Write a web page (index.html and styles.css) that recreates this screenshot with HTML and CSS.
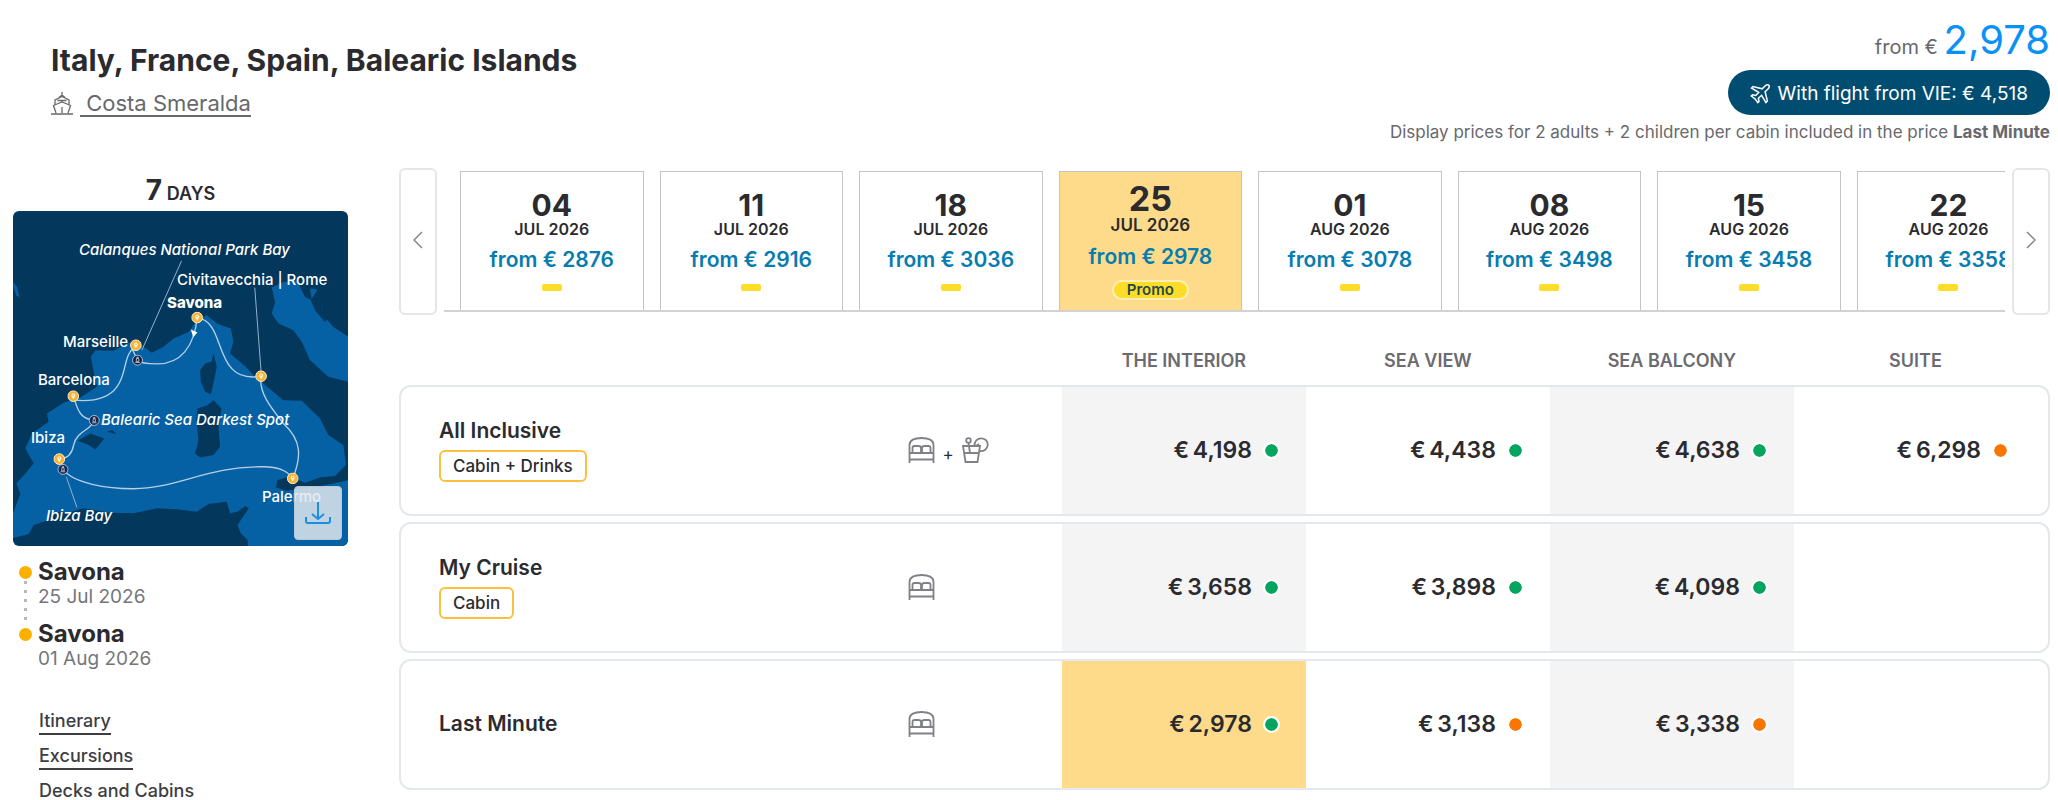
FILE: index.html
```html
<!DOCTYPE html>
<html lang="en">
<head>
  <meta charset="UTF-8">
  <meta name="viewport" content="width=device-width, initial-scale=1.0">
  <title>Italy, France, Spain, Balearic Islands</title>
  <link rel="stylesheet" href="styles.css">
</head>
<body>

  <!-- shared icons -->
  <svg class="icon-defs" aria-hidden="true">
    <symbol id="icon-bed" viewBox="0 0 26 26">
      <path d="M1 26V8C1 3 6 1 13 1s12 2 12 7v18M1 16h24M1 22.500h24M4 16v-5c0-1.500 1-2 2-2h4c1.500 0 2.500 1 2.500 2v5M13.500 16v-5c0-1 1-2 2.500-2h4c1 0 2 .5 2 2v5"/>
    </symbol>
    <symbol id="icon-drink" viewBox="0 0 27 26">
      <path d="M1 9h17l-2.500 16h-12zM2.500 16h14.500M8 16L6.500 6"/>
      <circle cx="6.500" cy="3.500" r="2.300"/>
      <path d="M12.500 9C12 4.500 15.500 1 19.500 1.300c4 .3 6.500 3.200 6.200 6.700-.3 4-3.700 6.500-8 6M14 9l3-2"/>
    </symbol>
    <symbol id="pin" viewBox="0 0 36 36">
      <circle cx="18" cy="18" r="16" fill="#f9b233" stroke="#fdf0cc" stroke-width="3"/>
      <path d="M18 28l-5-9a6 6 0 1 1 10 0z" fill="#fff6d8"/>
      <circle cx="18" cy="15" r="2.500" fill="#f9b233"/>
    </symbol>
    <symbol id="buoy" viewBox="0 0 36 36">
      <circle cx="18" cy="18" r="15" fill="#16284a" stroke="#c7d3e3" stroke-width="2.500"/>
      <path d="M15 13h6l1 9h-8zM16 13V9h4v4M11 25h14" fill="none" stroke="#dfe7f2" stroke-width="2"/>
    </symbol>
  </svg>

  <header class="cruise-header">
    <div class="cruise-heading">
      <h1 class="cruise-title">Italy, France, Spain, Balearic Islands</h1>
      <div class="ship">
        <svg class="ship-icon" viewBox="0 0 22 23" aria-hidden="true">
          <path d="M0 22h22M5 21L2.500 13.500 6 12l5-2 5 2 3.500 1.500L17 21M4 12.500V8l7-3.500L18 8v4.500M6.500 8.500h9M8 5.500L11 3l3 2.500M11 3V0M11 15v6"/>
        </svg>
        <a href="#" class="ship-link">&nbsp;Costa Smeralda</a>
      </div>
    </div>
    <div class="cruise-price">
      <p class="total">from € <span class="total-amount">2,978</span></p>
      <button class="flight-button">
        <svg class="flight-icon" viewBox="0 0 20 20" aria-hidden="true">
          <path d="M18.800 1.200c-1.200-.8-2.800-.2-3.800.8l-2.800 2.800L3 2.500 1.500 4l7.200 4.300-2.900 3.200-3.300-.7L1.300 12l3.700 2.800L7.800 18.700 9 17.500l-.6-3.300 3.200-2.900 4.300 7.200 1.500-1.500-2.300-9.200L18 5c1-1 1.600-2.600.8-3.800z"/>
        </svg>
        With flight from VIE: € 4,518
      </button>
      <p class="price-note">Display prices for 2 adults + 2 children per cabin included in the price <strong>Last Minute</strong></p>
    </div>
  </header>

  <main class="cruise-body">
    <aside class="sidebar">
      <p class="duration"><span class="duration-number">7</span> DAYS</p>

      <div class="map">
        <svg class="map-drawing" viewBox="0 0 335 335" role="img" aria-label="Route map">
          <g transform="scale(.333) translate(-38 -32)">
            <rect x="38" y="32" width="1008" height="1008" fill="#04375c"/>
            <!-- sea -->
            <path class="sea" d="M38 1014L85 1002 100 975 145 960 152 935 205 938 250 925 330 938 400 940 470 925 530 928 590 935 625 912 680 905 690 940 712 935 735 918 746 925 712 975 722 1000 742 1020 744 1040H1046V840L1000 850 960 858 860 872 828 862 832 840 870 830 915 848 960 832 1005 828 1038 795 1030 735 985 705 960 655 905 602 850 600 808 565 765 530 735 498 690 460 700 425 692 385 650 370 620 345 590 360 565 395 520 415 490 440 455 458 430 440 385 428 340 452 285 450 272 470 282 525 290 560 240 592 190 608 140 640 145 665 95 700 75 745 100 790 75 820 48 850 60 880 38 940z"/>
            <path class="sea" d="M815 262L850 245 890 240 915 290 935 300 930 265 950 268 970 300 965 340 1000 380 1046 410V545L985 530 930 480 905 425 880 390 835 370 815 340 825 305z"/>
            <!-- islands and coast details -->
            <path class="land" d="M640 458L650 500 642 540 632 582 615 575 602 545 600 510 615 490 635 484zM640 600L664 625 655 680 660 740 640 765 600 772 585 760 595 720 588 660 592 625 622 615zM232 722L270 700 312 715 285 748 265 735zM320 695L335 690 348 702zM932 300L955 265 970 300 965 335 985 350 975 365 945 330z"/>
            <path class="sea" d="M38 245L50 260 58 293 48 285 40 262z"/>
            <!-- route -->
            <path class="route" d="M591 352C583 440 540 492 470 491 440 491 420 488 412 480L396 447C370 470 380 520 350 560 325 595 275 605 220 600"/>
            <path class="route" d="M220 590C232 625 235 655 282 661 275 690 230 690 220 735 215 765 200 775 178 778L188 808C220 850 320 866 400 866 530 866 620 798 790 800 830 801 860 808 878 835"/>
            <path class="route" d="M878 835C905 770 905 720 850 670 810 620 775 575 783 528 660 550 670 420 630 375 620 360 605 355 591 352"/>
            <path class="leader" d="M544 182L425 450M764 262L783 515M198 830L230 922"/>
            <path d="M572 388l20 9-13 14z" fill="#fff"/>
            <use href="#pin" x="573" y="334" width="36" height="36"/>
            <use href="#pin" x="389" y="417" width="36" height="36"/>
            <use href="#pin" x="201" y="570" width="36" height="36"/>
            <use href="#pin" x="159" y="759" width="36" height="36"/>
            <use href="#pin" x="765" y="510" width="36" height="36"/>
            <use href="#pin" x="860" y="817" width="36" height="36"/>
            <use href="#buoy" x="394" y="462" width="36" height="36"/>
            <use href="#buoy" x="264" y="643" width="36" height="36"/>
            <use href="#buoy" x="170" y="790" width="36" height="36"/>
          </g>
          <text class="map-bay" x="66" y="44">Calanques National Park Bay</text>
          <text x="164" y="74">Civitavecchia | Rome</text>
          <text class="map-start" x="154" y="97">Savona</text>
          <text x="50" y="136">Marseille</text>
          <text x="25" y="174">Barcelona</text>
          <text class="map-bay" x="88" y="214">Balearic Sea Darkest Spot</text>
          <text x="18" y="232">Ibiza</text>
          <text x="249" y="291">Palermo</text>
          <text class="map-bay" x="33" y="310">Ibiza Bay</text>
        </svg>
        <button class="download-button" aria-label="Download map">
          <svg class="download-icon" viewBox="0 0 26 26" aria-hidden="true">
            <path d="M13 2v17M7 14l6 5 6-5M1 17v4q0 2 2 2h20q2 0 2-2v-4"/>
          </svg>
        </button>
      </div>

      <ul class="stops">
        <li class="stop">
          <span class="stop-city">Savona</span>
          <span class="stop-date">25 Jul 2026</span>
        </li>
        <li class="stop">
          <span class="stop-city">Savona</span>
          <span class="stop-date">01 Aug 2026</span>
        </li>
      </ul>

      <nav class="links">
        <a href="#" class="link">Itinerary</a>
        <a href="#" class="link">Excursions</a>
        <a href="#" class="link">Decks and Cabins</a>
      </nav>
    </aside>

    <section class="offers">
      <div class="dates">
        <button class="arrow-button" aria-label="Previous dates">
          <svg class="arrow-icon" viewBox="0 0 10 18" aria-hidden="true"><path d="M9 1L1 9l8 8"/></svg>
        </button>
        <div class="date-strip">
          <button class="date-card">
            <span class="date-day">04</span>
            <span class="date-month">JUL 2026</span>
            <span class="date-price">from € 2876</span>
            <span class="date-mark"></span>
          </button>
          <button class="date-card">
            <span class="date-day">11</span>
            <span class="date-month">JUL 2026</span>
            <span class="date-price">from € 2916</span>
            <span class="date-mark"></span>
          </button>
          <button class="date-card">
            <span class="date-day">18</span>
            <span class="date-month">JUL 2026</span>
            <span class="date-price">from € 3036</span>
            <span class="date-mark"></span>
          </button>
          <button class="date-card selected">
            <span class="date-day">25</span>
            <span class="date-month">JUL 2026</span>
            <span class="date-price">from € 2978</span>
            <span class="promo">Promo</span>
          </button>
          <button class="date-card">
            <span class="date-day">01</span>
            <span class="date-month">AUG 2026</span>
            <span class="date-price">from € 3078</span>
            <span class="date-mark"></span>
          </button>
          <button class="date-card">
            <span class="date-day">08</span>
            <span class="date-month">AUG 2026</span>
            <span class="date-price">from € 3498</span>
            <span class="date-mark"></span>
          </button>
          <button class="date-card">
            <span class="date-day">15</span>
            <span class="date-month">AUG 2026</span>
            <span class="date-price">from € 3458</span>
            <span class="date-mark"></span>
          </button>
          <button class="date-card">
            <span class="date-day">22</span>
            <span class="date-month">AUG 2026</span>
            <span class="date-price">from € 3358</span>
            <span class="date-mark"></span>
          </button>
        </div>
        <button class="arrow-button" aria-label="Next dates">
          <svg class="arrow-icon" viewBox="0 0 10 18" aria-hidden="true"><path d="M1 1l8 8-8 8"/></svg>
        </button>
      </div>

      <table class="rates">
        <colgroup>
          <col class="col-name">
          <col class="col-icons">
          <col class="col-price">
          <col class="col-price">
          <col class="col-price">
          <col>
        </colgroup>
        <thead>
          <tr>
            <td></td>
            <td></td>
            <th scope="col">THE INTERIOR</th>
            <th scope="col">SEA VIEW</th>
            <th scope="col">SEA BALCONY</th>
            <th scope="col">SUITE</th>
          </tr>
        </thead>
        <tbody>
          <tr>
            <th scope="row">
              <span class="rate-name">All Inclusive</span>
              <span class="rate-badge">Cabin + Drinks</span>
            </th>
            <td>
              <div class="rate-icons">
                <svg class="rate-icon"><use href="#icon-bed"/></svg>
                <span class="plus">+</span>
                <svg class="rate-icon"><use href="#icon-drink"/></svg>
              </div>
            </td>
            <td class="price shaded">€&thinsp;4,198<span class="dot"></span></td>
            <td class="price">€&thinsp;4,438<span class="dot"></span></td>
            <td class="price shaded">€&thinsp;4,638<span class="dot"></span></td>
            <td class="price">€&thinsp;6,298<span class="dot few"></span></td>
          </tr>
          <tr>
            <th scope="row">
              <span class="rate-name">My Cruise</span>
              <span class="rate-badge">Cabin</span>
            </th>
            <td>
              <div class="rate-icons">
                <svg class="rate-icon"><use href="#icon-bed"/></svg>
              </div>
            </td>
            <td class="price shaded">€&thinsp;3,658<span class="dot"></span></td>
            <td class="price">€&thinsp;3,898<span class="dot"></span></td>
            <td class="price shaded">€&thinsp;4,098<span class="dot"></span></td>
            <td class="price"></td>
          </tr>
          <tr>
            <th scope="row">
              <span class="rate-name">Last Minute</span>
            </th>
            <td>
              <div class="rate-icons">
                <svg class="rate-icon"><use href="#icon-bed"/></svg>
              </div>
            </td>
            <td class="price best">€&thinsp;2,978<span class="dot"></span></td>
            <td class="price">€&thinsp;3,138<span class="dot few"></span></td>
            <td class="price shaded">€&thinsp;3,338<span class="dot few"></span></td>
            <td class="price"></td>
          </tr>
        </tbody>
      </table>
    </section>
  </main>

</body>
</html>
```
FILE: styles.css
```css
* {
  box-sizing: border-box;
}

body {
  margin: 0;
  background-color: white;
  color: #2b2b2f;
  font-family: Inter, "Open Sans", sans-serif;
}

p, h1, ul {
  margin: 0;
  padding: 0;
}

button {
  font-family: inherit;
  color: inherit;
  padding: 0;
  cursor: pointer;
}

.icon-defs {
  display: none;
}

/* header */

.cruise-header {
  display: flex;
  justify-content: space-between;
  padding: 20px 8px 0 51px;
}

.cruise-heading {
  padding-top: 24px;
}

.cruise-title {
  font-size: 30px;
  line-height: 32px;
  font-weight: 700;
}

.ship {
  display: flex;
  align-items: center;
  gap: 7px;
  margin-top: 14px;
}

.ship-icon {
  width: 22px;
  height: 23px;
  fill: none;
  stroke: #68686d;
  stroke-width: 1.3;
}

.ship-link {
  color: #68686d;
  font-size: 22px;
  line-height: 26px;
  text-underline-offset: 4px;
}

.cruise-price {
  display: flex;
  flex-direction: column;
  align-items: flex-end;
}

.total {
  height: 40px;
  color: #68686d;
  font-size: 20px;
  line-height: 40px;
}

.total-amount {
  color: #0a91f5;
  font-size: 40px;
}

.flight-button {
  display: flex;
  align-items: center;
  gap: 8px;
  height: 45px;
  margin-top: 10px;
  padding: 2px 22px 0;
  border: none;
  border-radius: 24px;
  background-color: #004d71;
  color: white;
  font-size: 19px;
}

.flight-icon {
  width: 20px;
  height: 20px;
  fill: none;
  stroke: white;
  stroke-width: 1.5;
}

.price-note {
  margin-top: 6px;
  color: #68686d;
  font-size: 17px;
  line-height: 22px;
}

/* sidebar */

.cruise-body {
  display: flex;
  gap: 51px;
  padding: 25px 8px 0 13px;
}

.sidebar {
  flex: 0 0 335px;
}

.duration {
  height: 43px;
  padding-top: 4px;
  font-size: 18px;
  line-height: 36px;
  font-weight: 600;
  text-align: center;
}

.duration-number {
  font-size: 28px;
  font-weight: 700;
}

.map {
  position: relative;
  overflow: hidden;
  border-radius: 6px;
}

.map-drawing {
  display: block;
  width: 100%;
  fill: white;
  font-size: 15px;
  font-weight: 500;
}

.map-bay {
  font-style: italic;
}

.map-start {
  font-weight: 800;
}

.sea {
  fill: #0661a4;
}

.land {
  fill: #04375c;
}

.route {
  fill: none;
  stroke: #b5d0e8;
  stroke-width: 4;
}

.leader {
  fill: none;
  stroke: #8fb2cf;
  stroke-width: 3;
}

.download-button {
  position: absolute;
  right: 6px;
  bottom: 6px;
  display: flex;
  align-items: center;
  justify-content: center;
  width: 48px;
  height: 54px;
  border: 1px solid #b9c7d3;
  border-radius: 4px;
  background-color: rgba(226, 232, 239, 0.85);
}

.download-icon {
  width: 26px;
  height: 26px;
  fill: none;
  stroke: #1c8ee0;
  stroke-width: 2;
}

.stops {
  margin: 13px 0 0 6px;
  list-style: none;
}

.stop {
  position: relative;
  height: 62px;
  padding-left: 19px;
}

.stop::before {
  content: "";
  position: absolute;
  left: 0;
  top: 7px;
  width: 13px;
  height: 13px;
  border-radius: 50%;
  background-color: #fbb000;
}

/* dots between the two ports */
.stop:first-child::after {
  content: "";
  position: absolute;
  left: 5px;
  top: 22px;
  width: 3px;
  height: 45px;
  background: repeating-linear-gradient(#b4b9c4 0 3px, white 3px 9px);
}

.stop-city {
  display: block;
  font-size: 24px;
  line-height: 26px;
  font-weight: 700;
}

.stop-date {
  display: block;
  color: #75767d;
  font-size: 19px;
  line-height: 24px;
}

.links {
  display: flex;
  flex-direction: column;
  align-items: flex-start;
  gap: 8px;
  padding: 25px 0 0 26px;
}

.link {
  border-bottom: 2px solid #3d3d42;
  color: #3d3d42;
  font-size: 18px;
  line-height: 25px;
  font-weight: 500;
  text-decoration: none;
}

/* departure dates */

.offers {
  flex: 1;
  min-width: 0;
}

.dates {
  display: flex;
  align-items: center;
  gap: 7px;
}

.arrow-button {
  flex: 0 0 38px;
  height: 147px;
  border: 2px solid #e6e6e8;
  border-radius: 6px;
  background-color: white;
}

.arrow-icon {
  width: 10px;
  height: 18px;
  fill: none;
  stroke: #85858c;
  stroke-width: 1.5;
}

.date-strip {
  flex: 1;
  display: flex;
  gap: 16px;
  min-width: 0;
  height: 141px;
  padding-left: 16px;
  border-bottom: 2px solid #d2d2d4;
  overflow: hidden;
}

.date-card {
  flex: 0 0 11.88%;
  display: flex;
  flex-direction: column;
  align-items: center;
  border: 1px solid #c4c4c6;
  border-bottom: none;
  background-color: white;
  padding-top: 18px;
}

.date-day {
  font-size: 30px;
  line-height: 30px;
  font-weight: 700;
}

.date-month {
  font-size: 16px;
  line-height: 18px;
  font-weight: 600;
}

.date-price {
  margin-top: 9px;
  color: #077caf;
  font-size: 21px;
  line-height: 26px;
  font-weight: 600;
  white-space: nowrap;
}

.date-mark {
  width: 20px;
  height: 7px;
  margin-top: 11px;
  border-radius: 2px;
  background-color: #ffdc28;
}

.selected {
  background-color: #fddb8b;
  padding-top: 11px;
}

.selected .date-day {
  font-size: 34px;
  line-height: 32px;
}

.selected .date-month {
  font-size: 17px;
  line-height: 20px;
}

.promo {
  height: 20px;
  margin-top: 10px;
  padding: 0 13px;
  border: 2px solid #fff0b8;
  border-radius: 10px;
  background-color: #ffdc28;
  color: #1f4a50;
  font-size: 15px;
  line-height: 16px;
  font-weight: 600;
}

/* rates table */

.rates {
  width: 100%;
  margin-top: 22px;
  table-layout: fixed;
  border-collapse: separate;
  border-spacing: 0 6px;
}

.col-name {
  width: 30.8%;
}

.col-icons {
  width: 9.35%;
}

.col-price {
  width: 14.78%;
}

thead th {
  height: 36px;
  padding: 0 0 2px;
  color: #6b6b70;
  font-size: 18px;
  font-weight: 600;
}

thead th:last-child {
  padding-right: 13px;
}

tbody th,
tbody td {
  height: 131px;
  padding: 0 0 2px;
  border: 2px solid #e4e8ec;
  border-width: 2px 0;
}

tbody th {
  padding-left: 38px;
  border-left-width: 2px;
  border-radius: 12px 0 0 12px;
  text-align: left;
}

tbody td:last-child {
  border-right-width: 2px;
  border-radius: 0 12px 12px 0;
}

.rate-name {
  display: block;
  font-size: 21px;
  line-height: 26px;
  font-weight: 600;
}

.rate-badge {
  display: inline-block;
  margin-top: 6px;
  padding: 0 12px;
  border: 2px solid #fdbf3f;
  border-radius: 6px;
  font-size: 17px;
  line-height: 28px;
  font-weight: 500;
}

.rate-icons {
  display: flex;
  align-items: center;
  gap: 8px;
}

.rate-icon {
  width: 27px;
  height: 26px;
  fill: none;
  stroke: #808187;
  stroke-width: 1.8;
}

.plus {
  padding-top: 8px;
  font-size: 17px;
  line-height: 18px;
}

.price {
  padding-right: 26px;
  font-size: 23px;
  font-weight: 600;
  text-align: right;
}

.price:last-child {
  padding-right: 39px;
}

.shaded {
  background-color: #f4f4f5;
}

.best {
  background-color: #fddb8b;
}

.dot {
  display: inline-block;
  width: 17px;
  height: 17px;
  margin-left: 11px;
  border: 2px solid white;
  border-radius: 50%;
  background-color: #03a55f;
  background-clip: padding-box;
  vertical-align: -1px;
}

.few {
  background-color: #fa7600;
}
```
